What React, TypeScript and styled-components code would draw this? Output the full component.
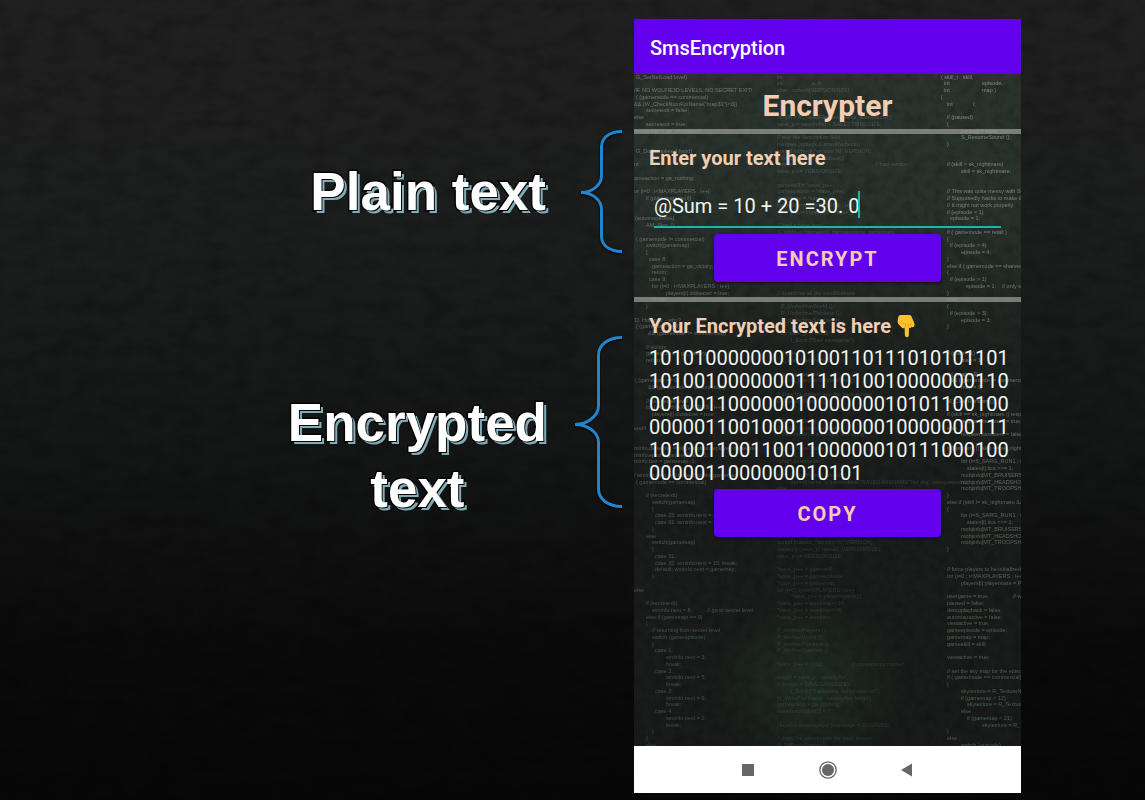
import React, { useState } from "react";
import styled, { createGlobalStyle } from "styled-components";

const GlobalStyle = createGlobalStyle`
  *, *::before, *::after { box-sizing: border-box; }
  body { margin: 0; background: #0c0d0d; }
`;

const Slide = styled.main`
  position: relative;
  display: flex;
  min-height: 100vh;
  padding: 19px 124px 7px 0;
  background: linear-gradient(180deg, #202020 0%, #1c1d1d 30%, #151616 55%, #0b0b0b 80%, #070707 100%);
`;

const Grain = styled.svg`
  position: absolute;
  inset: 0;
  width: 100%;
  height: 100%;
`;

const Annotations = styled.section`
  position: relative;
  flex: 1;
  display: flex;
  flex-direction: column;
  gap: 83px;
  padding: 111px 12px 0 0;
`;

const Annotation = styled.div<{ $align: string; $gap: number }>`
  display: flex;
  justify-content: flex-end;
  align-items: ${(p) => p.$align};
  gap: ${(p) => p.$gap}px;
`;

const Label = styled.h2<{ $drop?: number }>`
  margin: 0;
  padding-top: ${(p) => p.$drop ?? 0}px;
  font: bold 53px/66px "Liberation Sans", Arial, sans-serif;
  text-align: center;
  color: #fff;
  -webkit-text-stroke: 3px #050505;
  paint-order: stroke fill;
  text-shadow: 1px 1px 0 #050505, 3px 3px 0 #82adb8;
`;

const Brace = styled.svg`
  flex: none;
  fill: none;
  stroke: #2484c9;
  stroke-width: 3;
  stroke-linecap: butt;
  filter: drop-shadow(0 1px 1px #000);
`;

const Phone = styled.article`
  position: relative;
  flex: 0 0 387px;
  display: flex;
  flex-direction: column;
  font-family: Roboto, "Liberation Sans", sans-serif;
`;

const AppBar = styled.header`
  display: flex;
  align-items: center;
  height: 55px;
  padding: 2px 16px 0;
  background: #6200ee;
  color: #fff;
  font-size: 20px;
  font-weight: 500;
`;

const Screen = styled.div`
  position: relative;
  flex: 1;
  overflow: hidden;
  background: linear-gradient(180deg, #2a332d 0%, #28312b 22%, #1e2320 40%, #1a1d1b 65%, #181b19 100%);
`;

const Wallpaper = styled.svg`
  position: absolute;
  inset: 0;
  width: 100%;
  height: 100%;
  font: 22px "Liberation Sans", Arial, sans-serif;
`;

const Content = styled.div`
  position: relative;
`;

const Heading = styled.h1`
  margin: 0;
  padding-top: 4px;
  height: 55px;
  color: #f3cdb2;
  font-size: 30px;
  line-height: 55px;
  font-weight: 700;
  text-align: center;
`;

const Divider = styled.hr`
  height: 5px;
  margin: 0;
  border: 0;
  background: rgba(150, 154, 150, 0.75);
`;

const Panel = styled.section`
  display: flex;
  flex-direction: column;
  padding: 12px 12px 15px;
`;

const Caption = styled.label`
  display: flex;
  align-items: center;
  gap: 5px;
  height: 24px;
  padding-left: 3px;
  color: #f3cdb2;
  font-size: 20px;
  line-height: 24px;
  font-weight: 700;
`;

const Field = styled.div`
  position: relative;
  margin: 12px 8px 6px;
`;

const TextInput = styled.input`
  display: block;
  width: 100%;
  height: 46px;
  padding: 4px 0 0;
  border: 0;
  border-bottom: 2px solid #1fb5a5;
  border-radius: 0;
  outline: none;
  background: transparent;
  color: #f2f4f2;
  caret-color: transparent;
  font: 400 20px/24px Roboto, "Liberation Sans", sans-serif;
`;

const Caret = styled.span`
  position: absolute;
  left: 204px;
  top: 9px;
  width: 2px;
  height: 27px;
  background: #1fb5a5;
`;

const ActionButton = styled.button`
  align-self: center;
  width: 227px;
  height: 48px;
  padding: 2px 0 0;
  border: 0;
  border-radius: 4px;
  background: #6200ee;
  box-shadow: 0 1px 3px rgba(0, 0, 0, 0.6);
  color: #f3cdb2;
  font: 700 20px/24px Roboto, "Liberation Sans", sans-serif;
  letter-spacing: 2px;
  text-transform: uppercase;
`;

const Output = styled.output`
  display: block;
  margin: 9px 0 4px;
  padding-left: 3px;
  color: #f2f4f2;
  font-size: 20px;
  line-height: 23px;
  word-break: break-all;
`;

const NavBar = styled.nav`
  display: flex;
  justify-content: center;
  align-items: center;
  gap: 57px;
  height: 47px;
  background: #fff;
`;

const NavButton = styled.button`
  display: flex;
  padding: 0;
  border: 0;
  background: none;
  color: #636863;
`;

type Line = [number, number, string];

const leftCode: Line[] = [
  [0, 2, "G_SetNetLoad level)"], [2, 0, "/IF NO WOLFIE3D LEVELS, NO SECRET EXIT!"],
  [3, 2, "( (gamemode == commercial)"], [4, 0, "&& (W_CheckNumForName(\"map31\")<0))"],
  [5, 12, "secretexit = false;"], [6, 0, "else"], [7, 12, "secretexit = true;"],
  [8, 0, "ameaction = ga_completed;"], [11, 2, "G_DoCompleted (void)"], [13, 0, "nt"],
  [15, 0, "ameaction = ga_nothing;"], [17, 0, "or (i=0 ; i<MAXPLAYERS ; i++)"],
  [18, 12, "if (playeringame[i])"], [21, 1, "(automapactive)"], [22, 12, "AM_Stop ();"],
  [24, 2, "( gamemode != commercial)"], [25, 12, "switch(gamemap)"], [26, 12, "{"],
  [27, 15, "case 8:"], [28, 18, "gameaction = ga_victory;"], [29, 18, "return;"],
  [30, 15, "case 9:"], [31, 18, "for (i=0 ; i<MAXPLAYERS ; i++)"],
  [32, 32, "players[i].didsecret = true;"], [33, 18, "break;"], [34, 12, "}"],
  [36, 1, "D. Hommer - why?"], [37, 2, "( (gamemap == 8)"], [38, 14, "&& (gamemode != commercial))"],
  [40, 12, "// victory"], [41, 12, "gameaction = ga_victory;"], [42, 12, "return;"],
  [45, 1, "( (gamemap == 9)"], [46, 14, "&& (gamemode != commercial))"],
  [48, 12, "// exit secret level"], [49, 12, "for (i=0 ; i<MAXPLAYERS ; i++)"],
  [50, 18, "players[i].didsecret = true;"], [52, 0, "endif"],
  [55, 0, "minfo.didsecret = players[consoleplayer].didsecret;"],
  [56, 0, "minfo.epsd = gameepisode -1;"], [57, 0, "minfo.last = gamemap -1;"],
  [59, 0, "/ wminfo.next is 0 biased, unlike gamemap"], [60, 2, "( gamemode == commercial)"],
  [62, 12, "if (secretexit)"], [63, 18, "switch(gamemap)"], [64, 18, "{"],
  [65, 21, "case 15: wminfo.next = 30; break;"], [66, 21, "case 31: wminfo.next = 31; break;"],
  [67, 18, "}"], [68, 12, "else"], [69, 18, "switch(gamemap)"], [70, 18, "{"], [71, 21, "case 31:"],
  [72, 21, "case 32: wminfo.next = 15; break;"], [73, 21, "default: wminfo.next = gamemap;"],
  [74, 18, "}"], [76, 0, "else"], [78, 12, "if (secretexit)"],
  [79, 18, "wminfo.next = 8;"], [79, 73, "// go to secret level"],
  [80, 12, "else if (gamemap == 9)"], [81, 12, "{"], [82, 18, "// returning from secret level"],
  [83, 18, "switch (gameepisode)"], [84, 18, "{"], [85, 21, "case 1:"], [86, 32, "wminfo.next = 3;"],
  [87, 32, "break;"], [88, 21, "case 2:"], [89, 32, "wminfo.next = 5;"], [90, 32, "break;"],
  [91, 21, "case 3:"], [92, 32, "wminfo.next = 6;"], [93, 32, "break;"], [94, 21, "case 4:"],
  [95, 32, "wminfo.next = 2;"], [96, 32, "break;"], [97, 18, "}"], [98, 12, "}"], [99, 12, "else"],
];

const middleCode: Line[] = [
  [0, 0, "int"], [1, 0, "int"], [1, 35, "a, b;"], [2, 0, "char"], [2, 15, "vcheck[VERSIONSIZE];"],
  [6, 0, "length = M_ReadFile (savename, &savebuffer);"], [7, 0, "save_p = savebuffer + SAVESTRINGSIZE;"],
  [9, 0, "// skip the description field"], [10, 0, "memset (vcheck,0,sizeof(vcheck));"],
  [11, 0, "sprintf (vcheck,\"version %i\",VERSION);"], [12, 0, "if (strcmp (save_p, vcheck))"],
  [13, 0, "return;"], [13, 98, "// bad version"], [14, 0, "save_p += VERSIONSIZE;"],
  [16, 0, "gameskill = *save_p++;"], [17, 0, "gameepisode = *save_p++;"], [18, 0, "gamemap = *save_p++;"],
  [19, 0, "for (i=0 ; i<MAXPLAYERS ; i++)"], [20, 14, "playeringame[i] = *save_p++;"],
  [22, 0, "// load a base level"], [23, 0, "G_InitNew (gameskill, gameepisode, gamemap);"],
  [25, 0, "// get the times"], [26, 0, "a = *save_p++;"], [27, 0, "b = *save_p++;"],
  [30, 0, "leveltime = (a<<16) + (b<<8) + c;"], [32, 0, "// dearchive all the modifications"],
  [33, 4, "P_UnArchivePlayers ();"], [34, 4, "P_UnArchiveWorld ();"], [35, 4, "P_UnArchiveThinkers ();"],
  [36, 4, "P_UnArchiveSpecials ();"], [38, 4, "if (*save_p != 0x1d)"], [39, 14, "I_Error (\"Bad savegame\");"],
  [41, 4, "// done"], [42, 4, "Z_Free (savebuffer);"], [44, 0, "if (setsizeneeded)"],
  [45, 14, "R_ExecuteSetViewSize ();"], [47, 0, "// draw the pattern into the back screen"],
  [48, 0, "R_FillBackScreen ();"], [51, 0, "// G_SaveGame"], [52, 0, "// Called by the menu task."],
  [53, 0, "// Description is a 24 byte text string"], [55, 0, "void G_SaveGame"], [56, 0, "( int slot,"],
  [57, 2, "char* description )"], [59, 0, "if (M_CheckParm(\"-cdrom\"))"],
  [60, 14, "sprintf(name,\"c:\\\\doomdata\\\\\"SAVEGAMENAME\"%d.dsg\",savegameslot);"], [61, 0, "else"],
  [62, 14, "sprintf (name,SAVEGAMENAME\"%d.dsg\",savegameslot);"], [63, 0, "description = savedescription;"],
  [65, 0, "save_p = savebuffer = screens[1]+0x4000;"], [67, 0, "memcpy (save_p, description, SAVESTRINGSIZE);"],
  [68, 0, "save_p += SAVESTRINGSIZE;"], [69, 0, "sprintf (name2, \"version %i\",VERSION);"],
  [70, 0, "memcpy (save_p, name2, VERSIONSIZE);"], [71, 0, "save_p += VERSIONSIZE;"],
  [73, 0, "*save_p++ = gameskill;"], [74, 0, "*save_p++ = gameepisode;"], [75, 0, "*save_p++ = gamemap;"],
  [76, 0, "for (i=0 ; i<MAXPLAYERS ; i++)"], [77, 14, "*save_p++ = playeringame[i];"],
  [78, 0, "*save_p++ = leveltime>>16;"], [79, 0, "*save_p++ = leveltime>>8;"], [80, 0, "*save_p++ = leveltime;"],
  [82, 0, "P_ArchivePlayers ();"], [83, 0, "P_ArchiveWorld ();"], [84, 0, "P_ArchiveThinkers ();"],
  [85, 0, "P_ArchiveSpecials ();"], [87, 0, "*save_p++ = 0x1d;"], [87, 75, "// consistancy marker"],
  [89, 0, "length = save_p - savebuffer;"], [90, 0, "if (length > SAVEGAMESIZE)"],
  [91, 14, "I_Error (\"Savegame buffer overrun\");"], [92, 0, "M_WriteFile (name, savebuffer, length);"],
  [93, 0, "gameaction = ga_nothing;"], [94, 0, "savedescription[0] = 0;"],
  [96, 0, "players[consoleplayer].message = GGSAVED;"], [98, 0, "// draw the pattern into the back screen"],
  [99, 0, "R_FillBackScreen ();"],
];

const rightCode: Line[] = [
  [0, -6, "( skill_t   skill,"], [1, -3, "int"], [1, 35, "episode,"], [2, -3, "int"], [2, 35, "map )"],
  [3, -6, "{"], [4, 0, "int"], [4, 26, "i;"], [6, 0, "if (paused)"], [7, 0, "{"], [8, 14, "paused = false;"],
  [9, 14, "S_ResumeSound ();"], [10, 0, "}"], [13, 0, "if (skill > sk_nightmare)"],
  [14, 14, "skill = sk_nightmare;"], [17, 0, "// This was quite messy with SPECIAL"],
  [18, 0, "// Supposedly hacks to make the"], [19, 0, "// It might not work properly."],
  [20, 0, "if (episode < 1)"], [21, 3, "episode = 1;"], [23, 0, "if ( gamemode == retail )"], [24, 0, "{"],
  [25, 3, "if (episode > 4)"], [26, 14, "episode = 4;"], [27, 0, "}"],
  [28, 0, "else if ( gamemode == shareware )"], [29, 0, "{"], [30, 3, "if (episode > 1)"],
  [31, 19, "episode = 1;"], [31, 55, "// only start"], [32, 0, "}"], [33, 0, "else"], [34, 0, "{"],
  [35, 3, "if (episode > 3)"], [36, 14, "episode = 3;"], [37, 0, "}"], [41, 0, "if (map < 1)"],
  [42, 14, "map = 1;"], [44, 0, "if ( (map > 9)"], [45, 3, "&& ( gamemode != commercial) )"],
  [46, 14, "map = 9;"], [48, 0, "M_ClearRandom ();"], [50, 0, "if (skill == sk_nightmare || respawn"],
  [51, 14, "respawnmonsters = true;"], [52, 0, "else"], [53, 14, "respawnmonsters = false;"],
  [55, 0, "if (fastparm || (skill == sk_nightmare"], [56, 0, "{"], [57, 14, "for (i=S_SARG_RUN1 ; i<="],
  [58, 20, "states[i].tics >>= 1;"], [59, 14, "mobjinfo[MT_BRUISERSHOT]"], [60, 14, "mobjinfo[MT_HEADSHOT]"],
  [61, 14, "mobjinfo[MT_TROOPSHOT]"], [62, 0, "}"], [63, 0, "else if (skill != sk_nightmare && g"], [64, 0, "{"],
  [65, 14, "for (i=S_SARG_RUN1 ; i<="], [66, 20, "states[i].tics <<= 1;"], [67, 14, "mobjinfo[MT_BRUISERSHOT]"],
  [68, 14, "mobjinfo[MT_HEADSHOT]"], [69, 14, "mobjinfo[MT_TROOPSHOT]"], [70, 0, "}"],
  [73, 0, "// force players to be initialized upon"], [74, 0, "for (i=0 ; i<MAXPLAYERS ; i++)"],
  [75, 14, "players[i].playerstate = PST"], [77, 0, "usergame = true;"], [77, 66, "// will be"],
  [78, 0, "paused = false;"], [79, 0, "demoplayback = false;"], [80, 0, "automapactive = false;"],
  [81, 0, "viewactive = true;"], [82, 0, "gameepisode = episode;"], [83, 0, "gamemap = map;"],
  [84, 0, "gameskill = skill;"], [86, 0, "viewactive = true;"], [88, 0, "// set the sky map for the episode"],
  [89, 0, "if ( gamemode == commercial)"], [90, 0, "{"], [91, 14, "skytexture = R_TextureNum"],
  [92, 14, "if (gamemap < 12)"], [93, 20, "skytexture = R_Texture"], [94, 14, "else"],
  [95, 20, "if (gamemap < 21)"], [96, 35, "skytexture = R_T"], [97, 0, "}"], [98, 0, "else"],
  [99, 14, "switch (episode)"],
];

const CodeColumn = ({ lines, x, opacity }: { lines: Line[]; x: number; opacity: number }) => (
  <g fill="url(#ink)" opacity={opacity}>
    {lines.map(([row, indent, text]) => (
      <text key={`${row}-${indent}`} x={(x + indent) * 4} y={row * 27 + 18} xmlSpace="preserve">
        {text}
      </text>
    ))}
  </g>
);

const CodeWallpaper = () => (
  <Wallpaper viewBox="0 0 1548 2688" preserveAspectRatio="xMinYMin slice" aria-hidden="true">
    <defs>
      <linearGradient id="ink" gradientUnits="userSpaceOnUse" x1="0" y1="0" x2="0" y2="2688">
        <stop offset="0" stopColor="#a8b0aa" />
        <stop offset="0.45" stopColor="#8c978e" />
        <stop offset="0.7" stopColor="#6f8273" />
        <stop offset="1" stopColor="#627565" />
      </linearGradient>
      <radialGradient id="moss">
        <stop offset="0" stopColor="#27402c" stopOpacity="0.5" />
        <stop offset="1" stopColor="#27402c" stopOpacity="0" />
      </radialGradient>
      <filter id="blotch" x="0" y="0" width="100%" height="100%">
        <feTurbulence type="fractalNoise" baseFrequency="0.025" numOctaves="3" seed="8" />
        <feColorMatrix values="0 0 0 0 0  0 0 0 0 0  0 0 0 0 0  0 2 0 0 -0.8" />
      </filter>
    </defs>
    <ellipse cx="700" cy="2440" rx="400" ry="360" fill="url(#moss)" />
    <rect width="1548" height="2688" filter="url(#blotch)" opacity="0.2" />
    <CodeColumn lines={leftCode} x={0} opacity={0.55} />
    <CodeColumn lines={middleCode} x={143} opacity={0.28} />
    <CodeColumn lines={rightCode} x={313} opacity={0.7} />
  </Wallpaper>
);

const PointingHand = () => (
  <svg width="20" height="24" viewBox="0 0 20 24" role="img" aria-label="pointing down">
    <path
      d="M4.500 1h8.700c1 0 1.800.5 2.200 1.400l2.300 5.200c.6 1.400.9 2.600.8 3.700-.1 1.300-.9 2-2 2-.5 0-.9-.1-1.200-.4-.3.800-.9 1.200-1.700 1.200-.2 0-.4 0-.6-.1l-.2 7.200c0 1.300-.8 2-1.900 2s-1.900-.8-2-2.100L8.600 14c-1 .4-2 .2-2.900-.6L3 10.800C1.800 9.600 1.400 8.200 1.700 6.600L2.300 3c.2-1.200 1-2 2.200-2z"
      fill="#fdc32b"
    />
    <path
      d="M8.600 13.500c.8-1 1.100-2.100.9-3.300M13 13.500c-.6-1-.8-2.300-.6-3.600M15.500 12.500c-.7-1-1-2-1-3.200M5 7c.3 1.800 1.600 2.700 4.500 2.600"
      fill="none"
      stroke="#e59a17"
      strokeWidth="0.8"
      strokeLinecap="round"
    />
  </svg>
);

const cipher =
  "10101000000010100110111010101101" +
  "10100100000001111010010000000110" +
  "00100110000001000000010101100100" +
  "00000110010001100000010000000111" +
  "10100110011001100000010111000100" +
  "0000011000000010101";

export default function App() {
  const [message, setMessage] = useState("@Sum = 10 + 20 =30. 0");

  return (
    <>
      <GlobalStyle />
      <Slide>
        <Grain aria-hidden="true">
          <filter id="grain" x="0" y="0" width="100%" height="100%">
            <feTurbulence type="fractalNoise" baseFrequency="0.04 0.07" numOctaves="5" seed="3" />
            <feColorMatrix values="0 0 0 0 0  0 0 0 0 0  0 0 0 0 0  0 1.600 0 0 -0.65" />
          </filter>
          <rect width="100%" height="100%" filter="url(#grain)" opacity="0.25" />
        </Grain>

        <Annotations>
          <Annotation $align="center" $gap={35}>
            <Label>Plain text</Label>
            <Brace width="41" height="123" viewBox="0 0 41 123" aria-hidden="true">
              <path d="M41 1.500C28 1.500 20.500 8 20.500 17V46C20.500 55 11 62.500 0 62.500C11 62.500 20.500 70 20.500 79V106C20.500 115 28 121.500 41 121.500" />
            </Brace>
          </Annotation>
          <Annotation $align="flex-start" $gap={28}>
            <Label $drop={54}>
              Encrypted
              <br />
              text
            </Label>
            <Brace width="47" height="172" viewBox="0 0 47 172" aria-hidden="true">
              <path d="M47 1.500C33 1.500 23.500 9 23.500 19V70C23.500 80 12 88.500 0 88.500C12 88.500 23.500 96 23.500 106V153C23.500 163 33 170.500 47 170.500" />
            </Brace>
          </Annotation>
        </Annotations>

        <Phone>
          <AppBar>SmsEncryption</AppBar>
          <Screen>
            <CodeWallpaper />
            <Content>
              <Heading>Encrypter</Heading>
              <Divider />
              <Panel>
                <Caption htmlFor="message">Enter your text here</Caption>
                <Field>
                  <TextInput id="message" value={message} onChange={(e) => setMessage(e.target.value)} />
                  <Caret />
                </Field>
                <ActionButton type="button">Encrypt</ActionButton>
              </Panel>
              <Divider />
              <Panel>
                <Caption htmlFor="cipher">
                  Your Encrypted text is here
                  <PointingHand />
                </Caption>
                <Output id="cipher">{cipher}</Output>
                <ActionButton type="button">Copy</ActionButton>
              </Panel>
            </Content>
          </Screen>
          <NavBar>
            <NavButton type="button" aria-label="Recent apps">
              <svg width="22" height="22" viewBox="0 0 22 22">
                <rect x="4" y="5" width="12" height="12" fill="currentColor" />
              </svg>
            </NavButton>
            <NavButton type="button" aria-label="Home">
              <svg width="22" height="22" viewBox="0 0 22 22">
                <circle cx="11" cy="11" r="8.200" fill="none" stroke="currentColor" strokeWidth="1.300" />
                <circle cx="11" cy="11" r="6" fill="currentColor" />
              </svg>
            </NavButton>
            <NavButton type="button" aria-label="Back">
              <svg width="22" height="22" viewBox="0 0 22 22">
                <path d="M5 11L16 4.500V17.500Z" fill="currentColor" />
              </svg>
            </NavButton>
          </NavBar>
        </Phone>
      </Slide>
    </>
  );
}
